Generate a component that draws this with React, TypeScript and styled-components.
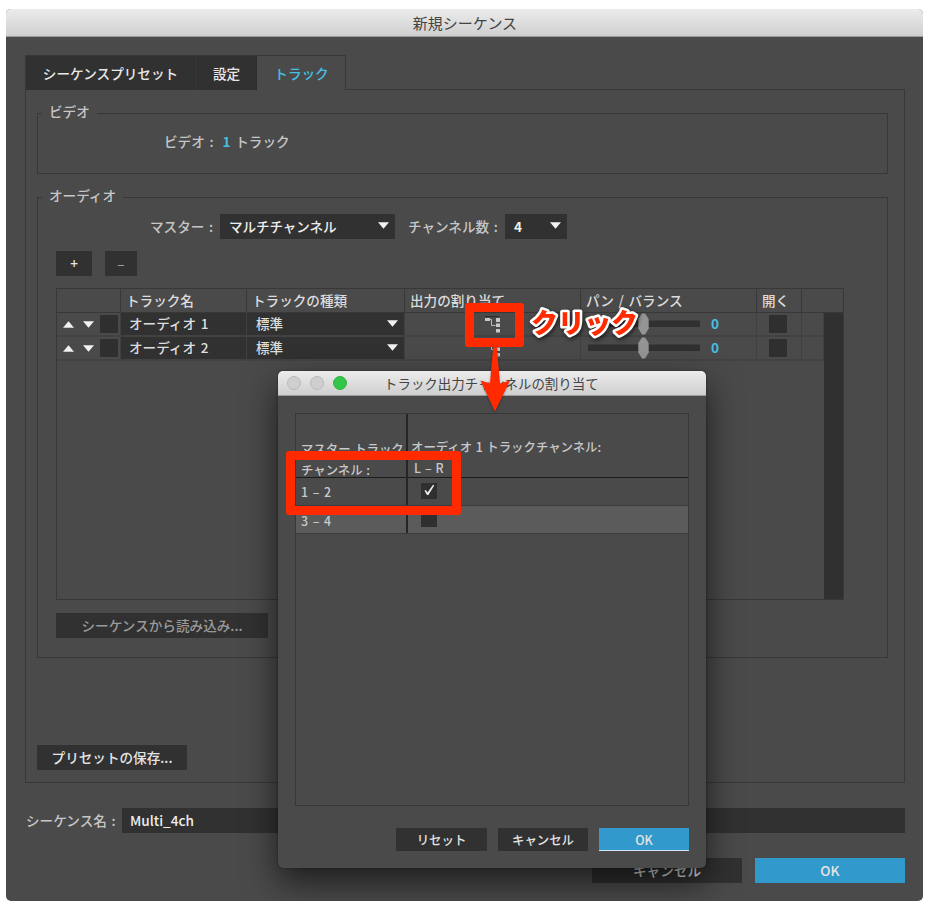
import React from "react";
import styled, { createGlobalStyle, css } from "styled-components";

const LINE = "#383838";
const DARK = "#313131";
const BG = "#4a4a4a";
const CYAN = "#43c0e4";
const RED = "#ff2a00";

const Global = createGlobalStyle`
  * { box-sizing: border-box; }
  html, body { margin: 0; padding: 0; background: #fff; }
  body {
    font-family: "Noto Sans CJK JP", "Noto Sans", sans-serif;
    font-size: 13.6px;
    line-height: 20px;
    font-weight: 500;
    word-spacing: 1.6px;
    color: #c6c6c6;
    overflow: hidden;
  }
`;

const Stage = styled.main`
  width: 930px;
  height: 912px;
  padding: 9px 7px 11px 6px;
  overflow: hidden;
`;

const Window = styled.section`
  position: relative;
  width: 917px;
  height: 892px;
  border-radius: 5px;
  overflow: hidden;
  background: ${BG};
`;

const TitleBar = styled.header<{ $dialog?: boolean }>`
  display: flex;
  align-items: center;
  justify-content: center;
  height: ${(p) => (p.$dialog ? 25 : 28)}px;
  padding-left: 1px;
  background: linear-gradient(#ececec, #cfcfcf);
  border-bottom: 1px solid #9a9a9a;
  color: #444;
  font-weight: 400;
  font-size: ${(p) => (p.$dialog ? 13.45 : 15)}px;
`;

const Body = styled.div`
  padding: 18px 18px 0 19px;
`;

const Tabs = styled.nav`
  display: flex;
  height: 35px;
  margin-bottom: -1px;
  position: relative;
`;

const Tab = styled.button<{ $w: number; $active?: boolean }>`
  width: ${(p) => p.$w}px;
  height: 35px;
  padding: 0 0 1px 1px;
  border: 1px solid ${LINE};
  border-right-color: #2d2d2d;
  border-bottom: 0;
  background: ${DARK};
  color: #e8e8e8;
  font: inherit;
  white-space: nowrap;
  ${(p) =>
    p.$active &&
    css`
      background: ${BG};
      color: ${CYAN};
      border-left: 0;
      border-right-color: ${LINE};
    `}
`;

const Panel = styled.div`
  width: 880px;
  height: 694px;
  border: 1px solid ${LINE};
  padding: 23px 16px 0 11px;
`;

const Group = styled.section<{ $h: number; $gap?: number }>`
  width: 851px;
  height: ${(p) => p.$h}px;
  border: 1px solid ${LINE};
  margin-bottom: ${(p) => p.$gap ?? 0}px;
`;

const Legend = styled.h2`
  width: fit-content;
  height: 20px;
  margin: -13px 0 0 4px;
  padding: 0 7px;
  background: ${BG};
  font: inherit;
`;

const VideoRow = styled.div`
  display: flex;
  gap: 9px;
  margin: 10px 0 0 126px;
`;

const Cyan = styled.b`
  color: ${CYAN};
  font-weight: 700;
`;

const MasterRow = styled.div`
  display: flex;
  align-items: center;
  margin: 9px 0 12px 112px;
  height: 25px;
`;

const FieldLabel = styled.label<{ $w: number }>`
  width: ${(p) => p.$w}px;
  padding-bottom: 2px;
  white-space: nowrap;
`;

const Select = styled.div<{ $w: number; $mr?: number }>`
  display: flex;
  align-items: center;
  justify-content: space-between;
  width: ${(p) => p.$w}px;
  height: 25px;
  padding: 0 6px 2px 9px;
  margin-right: ${(p) => p.$mr ?? 0}px;
  background: ${DARK};
  color: #eee;
  letter-spacing: -0.1px;
`;

const Row = styled.div<{ $gap: number; $ml: number }>`
  display: flex;
  gap: ${(p) => p.$gap}px;
  margin-left: ${(p) => p.$ml}px;
`;

const Button = styled.button<{ $w: number; $h?: number; $tone?: "dim" | "primary"; $small?: boolean; $edge?: boolean }>`
  width: ${(p) => p.$w}px;
  height: ${(p) => p.$h ?? 25}px;
  padding: 0 0 ${(p) => (p.$small ? 0 : 2)}px;
  border: 0;
  background: ${(p) => (p.$tone === "primary" ? "#3199cc" : DARK)};
  box-shadow: ${(p) => (p.$edge ? "inset 0 -1px #cfe4ee" : "none")};
  color: ${(p) => (p.$tone === "dim" ? "#9b9b9b" : "#e4e4e4")};
  font: inherit;
  font-size: ${(p) => (p.$small ? 12.4 : 13.6)}px;
  line-height: 20px;
  white-space: nowrap;
`;

const Table = styled.div`
  width: 788px;
  height: 312px;
  margin: 12px 0 13px 18px;
  border: 1px solid ${LINE};
`;

const columns = "64px 126px 158px 176px 176px 45px 1fr";

const HeadRow = styled.div`
  display: grid;
  grid-template-columns: ${columns};
  height: 24px;
  border-bottom: 1px solid ${LINE};
  color: #dcdcdc;
`;

const HeadCell = styled.div`
  height: 23px;
  padding: 1px 0 0 5px;
  border-right: 1px solid ${LINE};
  white-space: nowrap;
  &:last-child { border-right: 0; }
`;

const TableBody = styled.div`
  display: flex;
  height: 286px;
`;

const Rows = styled.div`
  width: 767px;
`;

const ScrollBar = styled.div`
  width: 19px;
  background: #303030;
`;

const TrackRow = styled.div`
  display: grid;
  grid-template-columns: ${columns};
  height: 24px;
`;

const Cell = styled.div<{ $dark?: boolean; $pl?: number; $pr?: number; $raise?: boolean }>`
  display: flex;
  align-items: center;
  height: 24px;
  padding: 0 ${(p) => p.$pr ?? 0}px ${(p) => (p.$raise ? 2 : 0)}px ${(p) => p.$pl ?? 0}px;
  border-right: 1px solid #404040;
  border-bottom: 2px solid #424242;
  background: ${(p) => (p.$dark ? DARK : "transparent")};
  color: #dedede;
  white-space: nowrap;
`;

const Spread = styled.span`
  flex: 1;
`;

const PanValue = styled(Cyan)`
  margin-left: 11px;
  padding-bottom: 2px;
`;

const Box = styled.span<{ $s?: number }>`
  display: flex;
  align-items: center;
  justify-content: center;
  flex: none;
  width: ${(p) => p.$s ?? 18}px;
  height: ${(p) => p.$s ?? 18}px;
  background: #2f2f2f;
`;

const TriangleSvg = styled.svg<{ $mr?: number }>`
  display: block;
  flex: none;
  margin-right: ${(p) => p.$mr ?? 0}px;
`;

const Triangle = ({ up, mr }: { up?: boolean; mr?: number }) => (
  <TriangleSvg $mr={mr} width="11" height="7" viewBox="0 0 11 7">
    <path d={up ? "M0 6.8H11L5.5 .3Z" : "M0 .3H11L5.5 6.8Z"} fill="#f2f2f2" />
  </TriangleSvg>
);

const RoutingIcon = () => (
  <svg width="17" height="18" viewBox="0 0 17 18">
    <path d="M1 1.5H15" stroke="#2c2c2c" strokeWidth="1" />
    <path d="M6 4.5H7.5V10.5H11.5" stroke="#b8b8b8" fill="none" />
    <path d="M1 3H6V6H1Z M12 3H16V7H12Z M12 8.5H16V12H12Z M12 14H16V17.5H12Z" fill="#c6c6c6" />
  </svg>
);

const Slider = () => (
  <svg width="112" height="22" viewBox="0 0 112 22">
    <path d="M0 7.5H112V14H0Z" fill="#303030" />
    <path d="M50.3 6L54 .5H57L60.7 6V15.5L57 21.5H54L50.3 15.5Z" fill="#949494" />
  </svg>
);

const NameRow = styled.div`
  display: flex;
  align-items: center;
  height: 25px;
  margin: 25px 0 25px 1px;
`;

const NameInput = styled.div`
  flex: 1;
  height: 25px;
  padding: 2px 8px;
  background: ${DARK};
  color: #eee;
`;

/* Floating assignment dialog; its shadow stays inside the window. */
const Dialog = styled.section`
  position: absolute;
  left: 272px;
  top: 362px;
  width: 428px;
  height: 497px;
  border-radius: 5px;
  background: ${BG};
  box-shadow: 0 14px 34px rgba(0, 0, 0, 0.62), 0 0 2px rgba(0, 0, 0, 0.5);
  font-size: 12.4px;
  ${TitleBar} { border-radius: 5px 5px 0 0; }
`;

const Lights = styled.div`
  display: flex;
  gap: 9px;
  width: 60px;
  margin: 0 37px 0 8px;
`;

const Light = styled.i<{ $on?: boolean }>`
  width: 14px;
  height: 14px;
  border-radius: 50%;
  background: ${(p) => (p.$on ? "#34c648" : "#d0cfce")};
  border: 1px solid ${(p) => (p.$on ? "#2fb542" : "#b9b9b9")};
`;

const DialogTitle = styled.span`
  flex: 1;
  white-space: nowrap;
`;

const Matrix = styled.div`
  width: 394px;
  height: 393px;
  margin: 17px 0 22px 17px;
  border: 1px solid ${LINE};
`;

const MatrixRow = styled.div<{ $h: number; $head?: boolean; $light?: boolean }>`
  display: grid;
  grid-template-columns: 112px 1fr;
  height: ${(p) => p.$h}px;
  border-bottom: 1px solid ${(p) => (p.$head ? "#1c1c1c" : "#3c3c3c")};
  background: ${(p) => (p.$light ? "#5b5b5b" : BG)};
  color: #c8c8c8;
`;

const MatrixCell = styled.div<{ $first?: boolean; $pt?: number; $lh?: number; $range?: boolean }>`
  padding: ${(p) => p.$pt ?? 0}px 0 0 ${(p) => (p.$first ? 5 : 3)}px;
  line-height: ${(p) => p.$lh ?? 20}px;
  border-right: ${(p) => (p.$first ? "2px solid #252525" : "0")};
  word-spacing: ${(p) => (p.$range ? 1.4 : 0.8)}px;
  letter-spacing: ${(p) => (p.$range ? 0.2 : 0)}px;
  white-space: nowrap;
`;

const CheckCell = styled.div<{ $pt: number }>`
  padding: ${(p) => p.$pt}px 0 0 13px;
`;

const Indent = styled.span`
  padding-left: 3px;
  word-spacing: 1.2px;
`;

/* Instruction markers drawn over the windows. */
const Marker = styled.div<{ $x: number; $y: number; $w: number; $h: number }>`
  position: absolute;
  left: ${(p) => p.$x}px;
  top: ${(p) => p.$y}px;
  width: ${(p) => p.$w}px;
  height: ${(p) => p.$h}px;
  border: 9px solid ${RED};
  border-radius: 3px;
`;

const Arrow = styled.svg`
  position: absolute;
  left: 472px;
  top: 331px;
  filter: drop-shadow(0 1px 1px rgba(0, 0, 0, 0.35));
`;

const Callout = styled.svg`
  position: absolute;
  left: 519px;
  top: 295px;
  overflow: visible;
  filter: drop-shadow(1px 2px 2px rgba(0, 0, 0, 0.6));
  text {
    font-size: 27px;
    font-weight: 900;
    fill: ${RED};
    stroke: #fff;
    stroke-width: 5px;
    stroke-linejoin: round;
    paint-order: stroke fill;
  }
`;

const tracks = ["オーディオ 1", "オーディオ 2"];

export default function App() {
  return (
    <>
      <Global />
      <Stage>
        <Window>
          <TitleBar>新規シーケンス</TitleBar>
          <Body>
            <Tabs>
              <Tab $w={170}>シーケンスプリセット</Tab>
              <Tab $w={62}>設定</Tab>
              <Tab $w={89} $active>トラック</Tab>
            </Tabs>
            <Panel>
              <Group $h={61} $gap={23}>
                <Legend>ビデオ</Legend>
                <VideoRow>
                  <span>ビデオ :</span>
                  <span><Cyan>1</Cyan> トラック</span>
                </VideoRow>
              </Group>
              <Group $h={461} $gap={87}>
                <Legend>オーディオ</Legend>
                <MasterRow>
                  <FieldLabel $w={70}>マスター :</FieldLabel>
                  <Select $w={175} $mr={13}>マルチチャンネル<Triangle /></Select>
                  <FieldLabel $w={97}>チャンネル数 :</FieldLabel>
                  <Select $w={62}><b>4</b><Triangle /></Select>
                </MasterRow>
                <Row $gap={13} $ml={18}>
                  <Button $w={36}>+</Button>
                  <Button $w={32} $tone="dim">–</Button>
                </Row>
                <Table>
                  <HeadRow>
                    <HeadCell />
                    <HeadCell>トラック名</HeadCell>
                    <HeadCell>トラックの種類</HeadCell>
                    <HeadCell>出力の割り当て</HeadCell>
                    <HeadCell>パン / バランス</HeadCell>
                    <HeadCell>開く</HeadCell>
                    <HeadCell />
                  </HeadRow>
                  <TableBody>
                    <Rows>
                      {tracks.map((name) => (
                        <TrackRow key={name}>
                          <Cell $pl={6}><Triangle up mr={9} /><Triangle mr={6} /><Box /></Cell>
                          <Cell $dark $raise $pl={8}>{name}</Cell>
                          <Cell $dark $raise $pl={9} $pr={6}>標準<Spread /><Triangle /></Cell>
                          <Cell $pl={79}><RoutingIcon /></Cell>
                          <Cell $pl={7}><Slider /><PanValue>0</PanValue></Cell>
                          <Cell $pl={12}><Box /></Cell>
                          <Cell />
                        </TrackRow>
                      ))}
                    </Rows>
                    <ScrollBar />
                  </TableBody>
                </Table>
                <Row $gap={0} $ml={18}>
                  <Button $w={212} $tone="dim">シーケンスから読み込み...</Button>
                </Row>
              </Group>
              <Button $w={150}>プリセットの保存...</Button>
            </Panel>
            <NameRow>
              <FieldLabel $w={96}>シーケンス名 :</FieldLabel>
              <NameInput>Multi_4ch</NameInput>
            </NameRow>
            <Row $gap={13} $ml={567}>
              <Button $w={150}>キャンセル</Button>
              <Button $w={150} $tone="primary">OK</Button>
            </Row>
          </Body>

          <Dialog>
            <TitleBar $dialog>
              <Lights><Light /><Light /><Light $on /></Lights>
              <DialogTitle>トラック出力チャンネルの割り当て</DialogTitle>
            </TitleBar>
            <Matrix>
              <MatrixRow $h={64} $head>
                <MatrixCell $first $pt={25} $lh={21}>マスター トラック<br />チャンネル :</MatrixCell>
                <MatrixCell $pt={23} $lh={21}>オーディオ 1 トラックチャンネル:<br /><Indent>L – R</Indent></MatrixCell>
              </MatrixRow>
              <MatrixRow $h={28}>
                <MatrixCell $first $range $pt={4}>1 – 2</MatrixCell>
                <CheckCell $pt={5}>
                  <Box $s={16}>
                    <svg width="16" height="16" viewBox="0 0 16 16">
                      <path d="M3.4 7.6L5 7.2L6.6 9.6L12 1.8L13.2 2.6L7.4 12H6Z" fill="#f0f0f0" />
                    </svg>
                  </Box>
                </CheckCell>
              </MatrixRow>
              <MatrixRow $h={28} $light>
                <MatrixCell $first $range $pt={5}>3 – 4</MatrixCell>
                <CheckCell $pt={5}><Box $s={16} /></CheckCell>
              </MatrixRow>
            </Matrix>
            <Row $gap={11} $ml={118}>
              <Button $w={91} $h={23} $small>リセット</Button>
              <Button $w={90} $h={23} $small>キャンセル</Button>
              <Button $w={90} $h={23} $small $tone="primary" $edge>OK</Button>
            </Row>
          </Dialog>

          <Marker $x={459} $y={294} $w={59} $h={44} />
          <Marker $x={280} $y={442} $w={175} $h={64} />
          <Arrow width="34" height="74" viewBox="0 0 34 74">
            <path d="M15.5 3H18.5L22 43.5L32 40.5L17 71.5L2.5 40.5L12 43.5Z" fill={RED} />
          </Arrow>
          <Callout width="120" height="40">
            <text x="6" y="29" textLength="107">クリック</text>
          </Callout>
        </Window>
      </Stage>
    </>
  );
}
